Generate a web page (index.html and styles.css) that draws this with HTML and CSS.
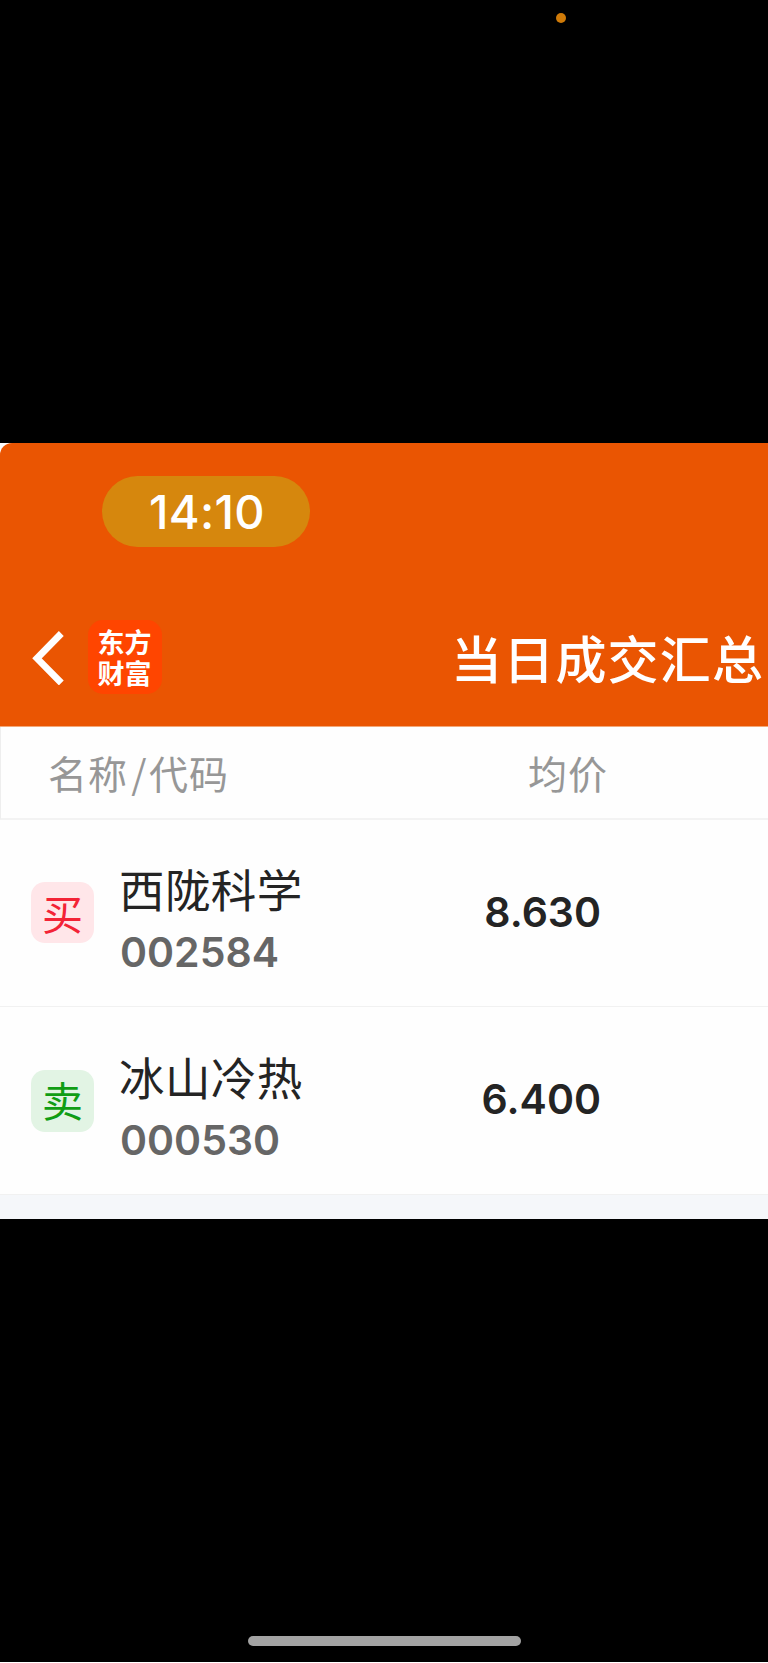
FILE: index.html
```html
<!DOCTYPE html>
<html lang="zh-CN">
<head>
<meta charset="utf-8">
<title>当日成交汇总</title>
<link rel="stylesheet" href="styles.css">
</head>
<body>
<div class="screen">
  <div class="top"><i class="indicator"></i></div>
  <main class="app">
    <header class="header">
      <div class="status"><span class="time">14:10</span></div>
      <div class="nav">
        <svg class="back" width="32" height="56" viewBox="0 0 32 56"><path d="M29.3 4.5 5 29.3 29.3 54" fill="none" stroke="#fff" stroke-width="6.8" stroke-linecap="butt" stroke-linejoin="miter"/></svg>
        <div class="logo"><span>东方</span><span>财富</span></div>
        <h1 class="title">当日成交汇总</h1>
      </div>
    </header>
    <div class="columns">
      <span class="col-name">名称<span class="slash">/</span>代码</span>
      <span class="col-price">均价</span>
    </div>
    <div class="row">
      <span class="badge buy">买</span>
      <div class="stock"><span class="name">西陇科学</span><span class="code">002584</span></div>
      <span class="price">8.630</span>
    </div>
    <div class="row last">
      <span class="badge sell">卖</span>
      <div class="stock"><span class="name">冰山冷热</span><span class="code">000530</span></div>
      <span class="price">6.400</span>
    </div>
    <div class="gap"></div>
  </main>
  <div class="bottom"><i class="home"></i></div>
</div>
</body>
</html>
```
FILE: styles.css
```css
* { box-sizing: border-box; }
body { margin: 0; background: #000; font-family: Inter, "Noto Sans CJK SC", sans-serif; }
.screen { display: flex; flex-direction: column; width: 768px; height: 1663px; overflow: hidden; background: #000; white-space: nowrap; }
.top { height: 443px; padding: 13px 0 0 556px; }
.indicator { display: block; width: 10px; height: 10px; border-radius: 50%; background: #cf7a08; }
.app { height: 776px; background: #fefefe; }
.header { height: 284px; background: #ea5502; border-top-left-radius: 12px; border-bottom: 1px solid #f3a878; overflow: hidden; }
.status { height: 137px; padding: 33px 0 0 102px; }
.time { display: block; width: 208px; height: 71px; padding-left: 2px; border-radius: 36px; background: #d6870d; color: #fff; font-size: 47px; font-weight: 500; line-height: 72px; text-align: center; letter-spacing: 0.3px; }
.nav { display: flex; align-items: center; height: 154px; padding: 0 0 0 32px; }
.back { flex: none; }
.logo { flex: none; display: flex; flex-direction: column; align-items: center; width: 74px; height: 74px; margin-left: 24px; padding: 6px 1px 0 0; border-radius: 15px; background: #ff4500; color: #fff; font: 700 27px/31px "Noto Sans CJK SC", sans-serif; }
.title { flex: none; margin: 0 0 0 289px; color: #fff; font: 500 51px/74px "Noto Sans CJK SC", sans-serif; letter-spacing: 1.2px; }
.columns { display: flex; height: 93px; border-left: 1px solid #eee; border-bottom: 2px solid #f3f3f3; color: #979797; font: 400 39px/90px "Noto Sans CJK SC", sans-serif; padding-left: 47px; }
.col-name { width: 480px; letter-spacing: 1px; }
.slash { display: inline-block; width: 21px; padding-left: 2px; text-align: center; }
.col-price { letter-spacing: 1px; }
.row { display: grid; grid-template-columns: 63px 351px 200px; align-items: center; height: 187px; padding-left: 31px; border-bottom: 1px solid #f1f1f1; }
.last { height: 188px; }
.badge { width: 63px; height: 61px; border-radius: 14px; font: 400 41px/60px "Noto Sans CJK SC", sans-serif; text-align: center; }
.buy { margin-bottom: 1px; background: #ffe6e9; color: #f32336; }
.sell { height: 62px; margin-top: 1px; line-height: 58px; background: #e2f4e4; color: #109d14; }
.stock { display: flex; flex-direction: column; padding: 14px 0 0 25px; }
.name { color: #242424; font: 400 45.5px/65px "Noto Sans CJK SC", sans-serif; letter-spacing: 0.4px; }
.code { padding-left: 1px; color: #666; font-size: 41px; font-weight: 600; line-height: 63px; }
.price { justify-self: start; width: 156px; padding-bottom: 2px; text-align: right; color: #242424; font-size: 41px; font-weight: 600; }
.last .price { padding-bottom: 4px; }
.gap { height: 24px; background: #f5f7fa; }
.bottom { display: flex; justify-content: center; align-items: flex-end; height: 444px; padding: 0 0 16px 1px; border-bottom: 1px solid #fff; }
.home { width: 273px; height: 10px; border-radius: 5px; background: #a3a3a3; }
```
